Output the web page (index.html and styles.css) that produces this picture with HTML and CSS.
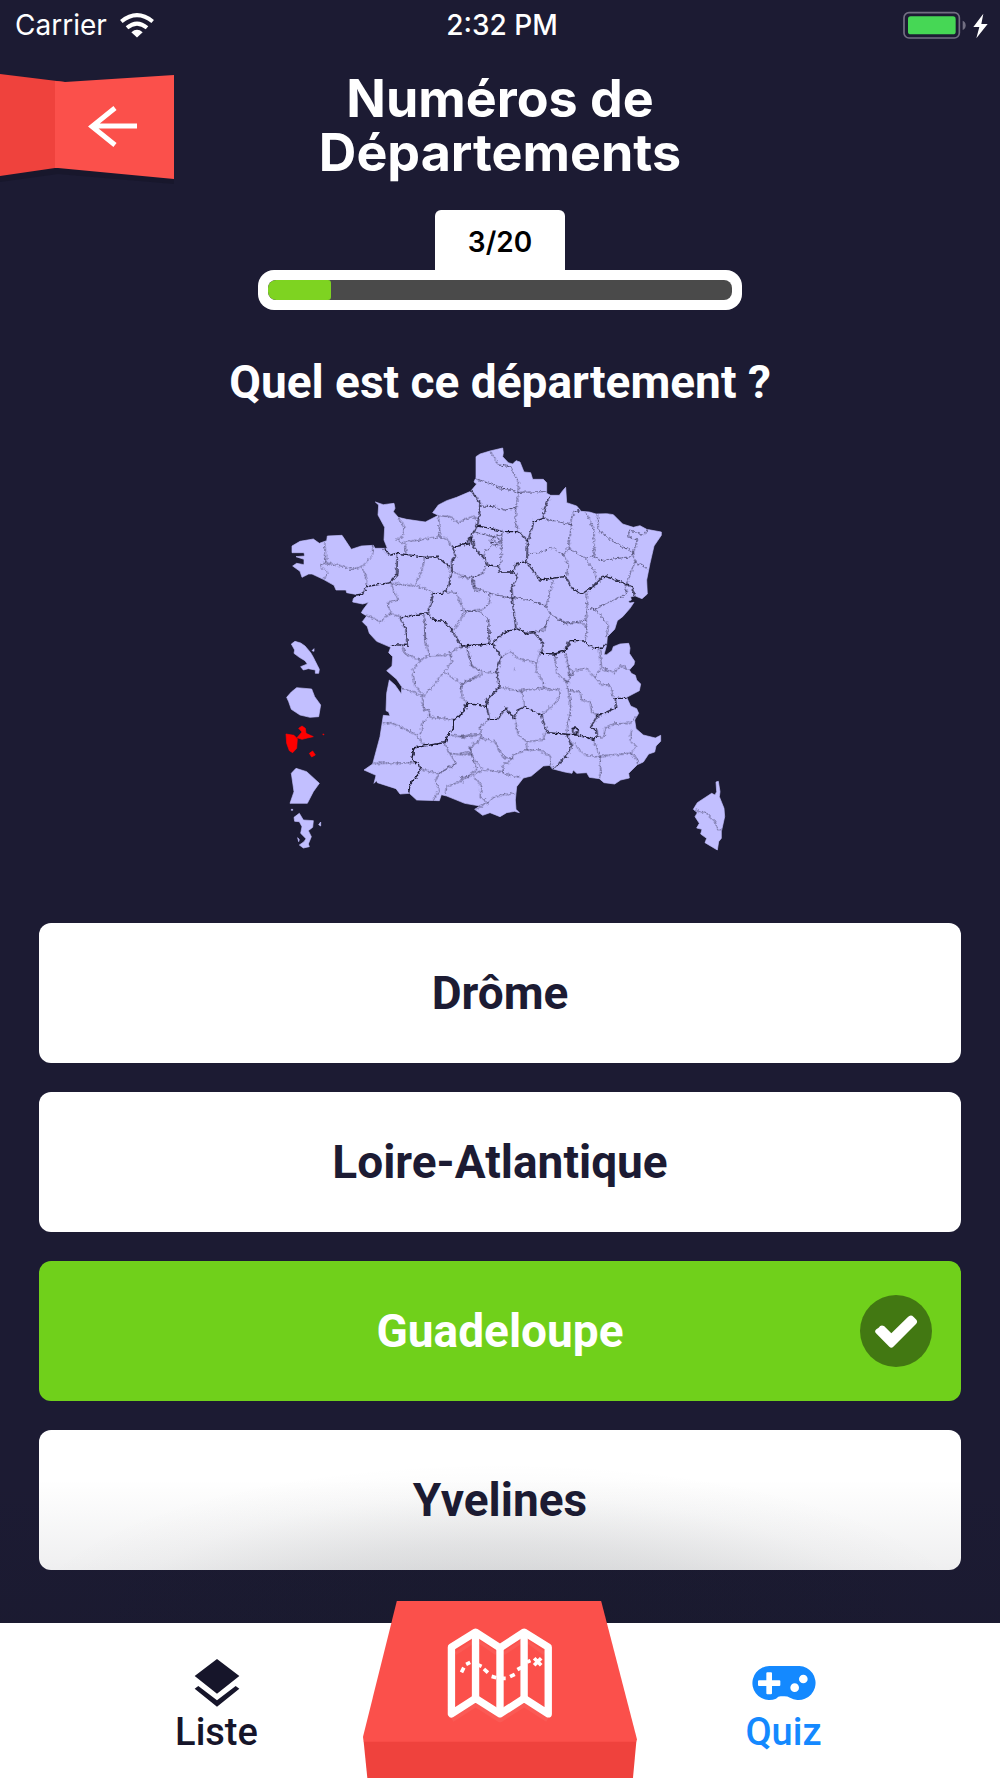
FILE: index.html
```html
<!DOCTYPE html>
<html lang="fr">
<head>
<meta charset="utf-8">
<meta name="viewport" content="width=device-width, initial-scale=1">
<title>Numéros de Départements</title>
<link rel="stylesheet" href="styles.css">
</head>
<body>
<div class="status">
  <div class="status-left">
    <span>Carrier</span>
    <svg class="wifi" viewBox="0 0 102 74" aria-hidden="true"><g fill="none" stroke="#fff"><path d="M4 25Q51-13 98 25" stroke-width="12"/><path d="M21 44Q51 19 81 44" stroke-width="12"/></g><path d="M34 57Q51 43 68 57L51 73Z" fill="#fff"/></svg>
  </div>
  <div class="status-time">2:32 PM</div>
  <div class="status-right">
    <svg class="battery" viewBox="0 0 258 84" aria-hidden="true"><rect x="3" y="5" width="166" height="76" rx="15" fill="none" stroke="#726f82" stroke-width="5"/><rect x="15" y="16" width="143" height="54" rx="8" fill="#46d755"/><path d="M179 29q9 3 9 14t-9 14z" fill="#726f82"/><path d="M241 8L211 48h18l-9 34 34-43h-19z" fill="#fff"/></svg>
  </div>
</div>

<header class="header">
  <button class="back" type="button" aria-label="Retour">
    <svg viewBox="0 0 174 114" aria-hidden="true">
      <path d="M0 8L60 14 174 10V112L58 102 0 110Z" fill="#141426" opacity=".5"/>
      <path d="M0 2L65 10 55 96 0 104Z" fill="#ef423d"/>
      <path d="M55 9L65 10 174 3V107L58 96H55Z" fill="#fb504b"/>
      <path d="M137 54H92M115 36L92 54.500L115 73" fill="none" stroke="#fff" stroke-width="5"/>
    </svg>
  </button>
  <h1 class="title">Numéros de Départements</h1>
</header>

<main class="main">
  <div class="progress">
    <div class="progress-count">3/20</div>
    <div class="progress-frame"><div class="progress-track"><div class="progress-fill" style="width:13.6%"></div></div></div>
  </div>
  <h2 class="question">Quel est ce département ?</h2>

  <svg class="map" viewBox="-30 0 1380 1260" role="img" aria-label="Carte de France, la Guadeloupe est en rouge">
    <defs>
      <filter id="rough" x="0" y="0" width="100%" height="100%" color-interpolation-filters="sRGB">
        <feTurbulence type="fractalNoise" baseFrequency="0.1" numOctaves="2" seed="4"/>
        <feDisplacementMap in="SourceGraphic" scale="14" xChannelSelector="R" yChannelSelector="G"/>
      </filter>
    </defs>
    <g fill="#c2bfff" stroke="#c2bfff" stroke-width="2" stroke-linejoin="round">
      <path d="M668 24L670 38 668 50 685 68 698 72 708 62 720 66 732 96 752 98 758 118 790 118 800 128 800 160 812 166 838 166 848 152 857 142 860 188 890 198 904 214 928 216 948 222 980 221 1000 224 1028 252 1060 262 1080 257 1100 268 1144 276 1144 286 1122 318 1110 370 1100 420 1102 462 1086 476 1066 468 1052 470 1054 480 1045 484 1049 489 1062 487 1050 505 1028 530 1012 542 1004 568 982 590 980 615 972 644 980 644 996 632 1000 620 1020 612 1046 610 1050 624 1048 640 1064 664 1062 674 1048 690 1054 700 1066 706 1070 720 1082 732 1078 752 1040 772 1052 798 1070 806 1076 820 1064 840 1068 866 1090 885 1126 894 1142 886 1142 904 1128 918 1124 936 1106 942 1090 966 1072 974 1046 1000 1048 1014 1022 1020 1004 1032 972 1028 958 1016 928 1012 920 998 890 1000 880 990 876 1000 854 996 816 986 810 976 790 978 754 1008 730 1014 710 1040 706 1080 708 1108 718 1118 704 1114 680 1118 660 1130 630 1118 608 1126 584 1108 600 1098 554 1090 500 1068 484 1064 478 1082 410 1080 388 1060 360 1062 348 1046 292 1028 290 1022 282 1030 288 1006 252 990 278 972 300 890 310 826 330 828 326 816 318 812 320 760 328 720 345 735 364 762 365 740 350 718 320 692 336 678 338 650 326 638 332 622 290 604 268 580 262 560 247 545 260 528 244 518 250 508 266 487 248 492 218 486 220 476 232 464 200 458 198 450 168 450 162 436 130 418 96 402 86 402 66 412 60 394 38 378 50 370 72 374 72 358 48 350 74 348 72 338 36 338 36 318 60 304 100 297 118 310 140 302 142 288 186 286 214 328 244 318 280 316 285 325 322 325 312 300 314 262 294 225 296 195 286 186 310 194 342 190 345 205 340 215 355 232 380 238 436 246 475 226 458 218 475 195 500 182 530 172 572 154 590 132 582 126 588 112 588 50 600 42 630 33Z"/>
      <path d="M1315 1024L1320 1055 1318 1070 1332 1105 1334 1130 1324 1175 1324 1195 1316 1205 1312 1230 1275 1208 1280 1195 1262 1182 1266 1168 1250 1164 1258 1150 1245 1130 1252 1118 1240 1108 1252 1088 1295 1060 1305 1065 1310 1055 1308 1026Z"/>
      <g transform="translate(0 540)">
        <path d="M34 72L45 64 62 69 75 78 92 98 100 112 105 122 112 136 118 148 116 160 106 160 106 150 85 146 70 150 62 140 82 132 75 122 58 112 42 100 44 90Z"/>
        <path d="M20 232L34 216 50 203 95 207 104 230 122 255 116 290 90 292 60 285 34 268 26 245Z"/>
        <path d="M34 460L48 445 80 455 118 490 100 515 82 550 30 550 42 515Z"/>
        <path d="M42 592L58 580 70 600 100 602 98 622 85 632 94 650 85 672 88 680 70 684 58 675 72 665 78 656 62 640 66 620 58 605 44 604ZM116 614l6-8v12zM53 653l5 6-2 6zM34 568h4v3h-4zM96 92l6-6v8z"/>
      </g>
      <path fill="#f00" stroke="#f00" transform="translate(0 540)" d="M18 342L42 346 52 356 50 385 38 398 28 392 20 370ZM51 353L66 336 56 325 66 318 76 325 78 340 100 350 82 354 66 358ZM88 400L98 393 106 405 95 411ZM128 343l4-1-1 3z"/>
    </g>
    <g filter="url(#rough)" fill="none" stroke="#1c1b33" stroke-linejoin="round">
      <g stroke-width="3" stroke-opacity=".75" stroke-dasharray="7 2">
        <path d="M355 232L372 260 370 285 350 300 376 312 378 340M376 306L430 298 480 290 475 226 510 230 535 248 575 230 596 235M480 290L500 295 515 322M434 352L425 395 405 435 460 458M330 430L400 438M332 430L355 480 322 490 332 520 362 532M332 520L300 545 260 525M134 308L138 368 120 375 145 400 132 416M138 368L185 378 215 388 246 380 278 345 278 316M246 385L260 410 258 440M516 392L560 415 600 405M580 410L580 445 600 455M488 455L530 460 545 500 556 516 522 570M556 516L600 508M432 525L436 600"/>
        <path transform="translate(540 0)" d="M92 35L115 75 150 80 175 125 175 155 168 200 165 245 175 275M45 115L110 138 175 157 258 155M110 138L120 148 140 146M60 198L100 200 135 210 175 200M250 235L335 255M330 255L342 212 362 212M335 255L325 325 380 358 402 345 402 270 385 230 375 218M412 222L415 272 460 305 520 338 532 300 505 290 508 270 555 285 562 268M520 338L515 350 420 362 400 348M520 338L525 365 560 385M525 365L500 430 495 455M203 340L235 340 275 322 310 345 325 375 320 405M310 345L325 325M378 358L400 390 410 415M40 275L95 290 125 285 128 275M125 285L125 320 122 370M90 300L105 290 122 300 115 318 95 312ZM100 290L110 318M92 308L122 305M95 318L75 335 72 355M75 378L70 400 38 412 40 440 90 460 155 475M38 412L0 410M90 460L88 490 60 515 0 512M60 515L85 540 88 610M155 472L200 478 258 498 280 420M258 498L270 520 315 550 378 540 382 505 378 460M270 520L258 560 230 575M382 505L405 508 500 462 495 430M405 508L445 555 440 590M378 540L380 570 375 600"/>
        <path transform="translate(0 540)" d="M368 80L375 100 422 122 398 150 405 200 430 222M422 122L440 108 510 105M436 0L435 60 450 110M545 78L510 98 515 125 470 185 440 218 428 230 430 268 450 270 445 285 455 292 520 298M364 205L400 215 428 230M495 158L545 192 545 230 562 248M545 192L600 168M560 80L575 140 600 150M310 310L330 308 360 318 410 345 430 372M420 345L430 305 450 285M280 430L410 428M420 445L475 462 528 430 500 385 495 368M510 345L555 352 600 345M510 400L550 405 575 400 570 385 600 362M575 400L590 450 540 485 500 500 496 522M475 462L465 485 478 510 460 540M475 462L530 430M540 470L550 490"/>
        <path transform="translate(540 540)" d="M20 80L35 135 65 155 110 160M65 160L15 185 0 210M125 110L150 95 175 115 228 128 230 155 250 185 250 205M118 200L170 212 250 205 298 210 300 225 290 245 245 285M170 212L185 215 195 260M240 90L232 128M85 0L88 70M285 102L290 160 320 185 330 170 318 100M320 185L325 210 330 240 332 265 320 340M330 170L350 150 378 145 405 172 425 140 418 85M320 140L340 155 330 170M312 180L330 190M425 145L465 158 480 135 508 150M405 172L425 195 450 195 460 230M328 212L360 215 365 240 390 245 395 275 420 288M412 350L432 350 435 325 460 312 510 310 528 290M515 330L510 360 530 380 510 400 420 408 400 358M510 400L532 415 532 432M420 408L422 450 418 476M420 412L375 405 330 360M165 298L175 345 200 365 250 360 255 335M200 365L200 390 160 405 150 425 128 435 130 460 180 472M200 390L240 390 272 410 275 440M88 298L60 320 65 352 30 380 35 410 70 450 130 455M65 355L105 365 130 412 160 415M0 350L60 340M0 400L30 395M70 450L40 465 0 475M40 470L65 495 60 530 85 548 105 528 165 520M85 548L44 568M705 570L740 580 765 605 775 632 784 630M163 148h4M260 0L255 30 225 35M300 0L320 12 365 8 378 20"/>
      </g>
      <g stroke-width="4">
        <path d="M310 325L330 345 352 340 400 346 436 352 470 350 490 365 516 388M352 340L350 405 330 428 260 440 248 462 220 466M572 290L560 312 518 322 526 350 515 365 516 392 505 440 488 460 460 460 452 495 442 518 400 525 362 535 378 570 382 616 335 614M442 518L462 540 495 545 515 570 545 618 640 612"/>
        <path transform="translate(540 0)" d="M34 152L60 190 58 225 52 258 90 265 130 275 175 275 203 305 222 245 250 235 254 205 270 170M52 258L35 285 40 320 75 358 80 375 115 378 120 396 160 396 168 370 200 365 203 305M35 285L30 312 0 312M160 396L172 410 155 445 158 490 168 565 200 580 222 578 250 610 245 640 285 642 320 630 330 602 370 602 400 625 425 625 440 612M168 565L130 580 95 612M200 365L240 420 315 410 336 445 365 462 400 440 430 408 470 420 515 440 525 470M322 605L316 632"/>
        <path transform="translate(540 540)" d="M95 72L125 110 110 150 118 200 80 240 80 260 88 298 112 298 138 264 162 296 172 270 195 260 215 270 245 285 260 338 310 342 350 345 400 358 412 350 410 330 392 322 410 290 470 262 465 235 500 235M320 342L334 378 325 400 305 420 300 432 276 444M80 260L20 250 0 290M338 332a8 8 0 1 0 16 0a8 8 0 1 0-16 0"/>
        <path transform="translate(0 540)" d="M540 290L520 300 520 328 505 340 495 368 430 378 402 384 395 420 415 430 420 455 390 495 386 520M540 290L520 300M562 248L556 270 520 300"/>
      </g>
    </g>
  </svg>

  <div class="answers">
    <button class="answer" type="button">Drôme</button>
    <button class="answer" type="button">Loire-Atlantique</button>
    <button class="answer answer-correct" type="button">Guadeloupe
      <svg class="check" viewBox="0 0 216 216" aria-hidden="true"><circle cx="108" cy="108" r="108" fill="#427812"/><path d="M56 98Q63 87 73 94L94 115 143 67Q152 57 161 66L169 74Q174 80 168 87L100 155Q94 161 88 155L48 115Q42 109 49 103Z" fill="#fff"/></svg>
    </button>
    <button class="answer" type="button">Yvelines</button>
  </div>
</main>

<nav class="nav">
  <a class="nav-item" href="#liste">
    <svg class="nav-icon" viewBox="0 0 192 144" aria-hidden="true"><path d="M96 0L163 51 96 104 29 51ZM40 81L96 124 152 81 163 89 96 143 29 89Z" fill="#16152a"/></svg>
    <span>Liste</span>
  </a>
  <a class="nav-map" href="#carte" aria-label="Carte">
    <svg viewBox="0 0 818 529" aria-hidden="true">
      <path d="M101 0H711L818 413 816 421H2L0 405Z" fill="#fb504b"/>
      <path d="M2 420H816L806 529H13Z" fill="#ef423d"/>
      <g transform="translate(-72 -65)">
        <g fill="none" stroke="#fa5a55" stroke-width="22" stroke-linejoin="round"><path d="M336 416L408 370 481 416 553 370 625 416"/><path d="M348 222L400 188M420 188L470 222M492 222L544 188M565 188L613 222" stroke-width="10"/></g>
        <g fill="none" stroke="#fff" stroke-width="22" stroke-linejoin="round"><path d="M336 203L408 158 481 205 553 158 625 203V402L553 356 481 402 408 356 336 402Z"/><path d="M408 158V356M481 205V402M553 158V356"/></g>
        <path d="M366 278L373 264M380 254L392 248M413 254L426 260M433 268L445 279M456 290L470 294M484 296H498M511 291L525 284M533 270L545 263M562 247L572 243M583 236L604 257M604 236L583 257" fill="none" stroke="#fff" stroke-width="11"/>
      </g>
    </svg>
  </a>
  <a class="nav-item nav-item-active" href="#quiz">
    <svg class="nav-icon" viewBox="0 0 192 144" aria-hidden="true"><path fill-rule="evenodd" d="M52 21H142A51 51 0 1 1 114 116Q107 112 97 112H86Q79 112 72 119A51 51 0 1 1 52 21ZM46 40Q43 40 43 43V64H21Q18 64 18 67V78Q18 81 21 81H43V103Q43 106 46 106H57Q60 106 60 103V81H82Q85 81 85 78V67Q85 64 82 64H60V43Q60 40 57 40ZM141 60a13 13 0 1 0 26 0a13 13 0 1 0-26 0ZM115 86a13 13 0 1 0 26 0a13 13 0 1 0-26 0Z" fill="#1489ff"/></svg>
    <span>Quiz</span>
  </a>
</nav>
</body>
</html>
```

FILE: styles.css
```css
* {
  box-sizing: border-box;
}

body {
  margin: 0;
  min-height: 100vh;
  display: flex;
  flex-direction: column;
  background: #1c1b33;
  color: #fff;
  font-family: Roboto, "Liberation Sans", sans-serif;
}

button {
  border: 0;
  padding: 0;
  background: none;
  font: inherit;
  color: inherit;
  cursor: pointer;
}

svg {
  display: block;
}

.status {
  display: grid;
  grid-template-columns: 1fr auto 1fr;
  align-items: center;
  height: 50px;
  padding: 0 11px 0 15px;
  font-family: Inter, "Liberation Sans", sans-serif;
  font-size: 28px;
}

.status-left {
  display: flex;
  align-items: center;
  gap: 13px;
}

.status-time {
  font-weight: 500;
}

.status-right {
  justify-self: end;
}

.wifi {
  width: 34px;
  height: 25px;
}

.battery {
  width: 86px;
  height: 28px;
}

.header {
  display: grid;
  grid-template-columns: 1fr 400px 1fr;
  align-items: start;
  padding-top: 22px;
}

.back {
  width: 174px;
}

.title {
  margin: 0;
  font-family: Inter, "Liberation Sans", sans-serif;
  font-size: 52px;
  line-height: 54px;
  font-weight: 700;
  text-align: center;
}

.main {
  display: flex;
  flex-direction: column;
  align-items: center;
  padding: 24px 39px 53px;
}

.progress {
  display: flex;
  flex-direction: column;
  align-items: center;
  width: 484px;
}

.progress-count {
  width: 130px;
  height: 60px;
  border-radius: 6px 6px 0 0;
  background: #fff;
  color: #000;
  font-family: Inter, "Liberation Sans", sans-serif;
  font-size: 28px;
  font-weight: 600;
  line-height: 64px;
  text-align: center;
}

.progress-frame {
  width: 100%;
  padding: 10px;
  border-radius: 16px;
  background: #fff;
}

.progress-track {
  height: 20px;
  border-radius: 8px;
  overflow: hidden;
  background: #4a4a4a;
}

.progress-fill {
  height: 100%;
  border-radius: 8px 3px 3px 8px;
  background: #7ed321;
}

.question {
  margin: 44px 0 30px;
  font-size: 46px;
  line-height: 56px;
  font-weight: 700;
  text-align: center;
}

.map {
  width: 460px;
  height: 420px;
}

.answers {
  display: flex;
  flex-direction: column;
  gap: 29px;
  width: 100%;
  margin-top: 63px;
}

.answer {
  position: relative;
  height: 140px;
  border-radius: 12px;
  background: #fff;
  color: #1c1b33;
  font-size: 46px;
  font-weight: 700;
}

.answer-correct {
  background: #70d01b;
  color: #fff;
}

.check {
  position: absolute;
  top: 34px;
  right: 29px;
  width: 72px;
  height: 72px;
}

.nav {
  position: relative;
  display: grid;
  grid-template-columns: 1fr 274px 1fr;
  grid-template-rows: 100%;
  align-items: end;
  height: 155px;
  margin-top: auto;
  background: #fff;
}

.nav::before {
  content: "";
  position: absolute;
  right: 0;
  bottom: 100%;
  left: 0;
  height: 160px;
  background:
    radial-gradient(480px 160px at 50% 100%, rgba(18, 24, 32, .15), rgba(18, 24, 32, .08) 50%, rgba(18, 24, 32, .02) 80%, rgba(18, 24, 32, 0)),
    linear-gradient(to top, rgba(18, 20, 32, .12), rgba(18, 20, 32, .06) 40%, rgba(18, 20, 32, 0) 90%);
  pointer-events: none;
}

.nav-map {
  position: relative;
}

.nav-item {
  display: flex;
  flex-direction: column;
  align-items: center;
  gap: 2px;
  padding: 0 0 23px 70px;
  color: #16152a;
  font-size: 38px;
  line-height: 46px;
  font-weight: 500;
  text-decoration: none;
}

.nav-item-active {
  padding: 0 70px 23px 0;
  color: #1489ff;
}

.nav-icon {
  width: 64px;
  height: 48px;
}
```
